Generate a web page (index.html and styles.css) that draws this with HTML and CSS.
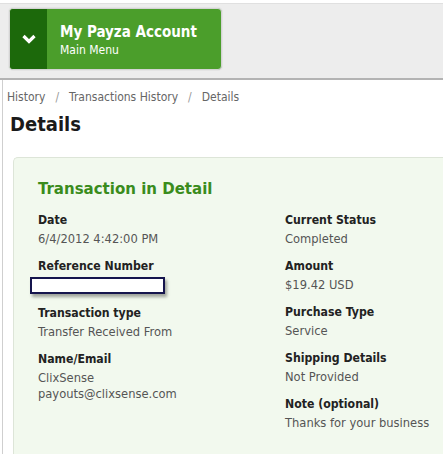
FILE: index.html
```html
<!DOCTYPE html>
<html lang="en">
<head>
  <meta charset="UTF-8" />
  <title>Details</title>
  <link rel="stylesheet" href="styles.css">
</head>
<body>
  <div class="topbar">
    <div class="menu-btn">
      <div class="menu-toggle">
        <svg width="16" height="12" viewBox="0 0 16 12"><path d="M2.5 3 L8 8.5 L13.5 3" fill="none" stroke="#fff" stroke-width="3.2"/></svg>
      </div>
      <div class="menu-text">
        <div class="menu-title">My Payza Account</div>
        <div class="menu-sub">Main Menu</div>
      </div>
    </div>
  </div>

  <div class="page">
    <div class="crumbs">
      <span>History</span><span class="sep">/</span><span>Transactions History</span><span class="sep">/</span><span>Details</span>
    </div>
    <h1>Details</h1>

    <div class="card">
      <h2>Transaction in Detail</h2>
      <div class="cols">
        <div class="col">
          <div class="field">
            <div class="label">Date</div>
            <div class="value">6/4/2012 4:42:00 PM</div>
          </div>
          <div class="field">
            <div class="label">Reference Number</div>
            <div class="refbox"></div>
          </div>
          <div class="field">
            <div class="label">Transaction type</div>
            <div class="value">Transfer Received From</div>
          </div>
          <div class="field">
            <div class="label">Name/Email</div>
            <div class="value">ClixSense<br>payouts@clixsense.com</div>
          </div>
        </div>
        <div class="col">
          <div class="field">
            <div class="label">Current Status</div>
            <div class="value">Completed</div>
          </div>
          <div class="field">
            <div class="label">Amount</div>
            <div class="value">$19.42 USD</div>
          </div>
          <div class="field">
            <div class="label">Purchase Type</div>
            <div class="value">Service</div>
          </div>
          <div class="field">
            <div class="label">Shipping Details</div>
            <div class="value">Not Provided</div>
          </div>
          <div class="field">
            <div class="label">Note (optional)</div>
            <div class="value">Thanks for your business</div>
          </div>
        </div>
      </div>
    </div>
  </div>
</body>
</html>
```

FILE: styles.css
```css
body {
  margin: 0;
  font-family: "DejaVu Sans Condensed", "DejaVu Sans", sans-serif;
  background: #fff;
  color: #222;
  width: 443px;
  height: 454px;
  overflow: hidden;
}
.topbar {
  margin-top: 3px;
  border-top: 1px solid #e0e0e0;
  background: #ededed;
  height: 70px;
  border-bottom: 2px solid #b3b3b3;
  padding: 4px 0 0 9px;
}
.menu-btn {
  display: flex;
  width: 211px;
  height: 60px;
  border: 1px solid #d4d4d4;
  border-radius: 4px;
  background: #4b9e2b;
  box-shadow: 0 0 0 1px #e4e4e4;
  overflow: hidden;
}
.menu-toggle {
  width: 37px;
  background: #1c690b;
  display: flex;
  align-items: center;
  justify-content: center;
}
.menu-text {
  color: #fff;
  padding: 13px 0 0 13px;
}
.menu-title {
  font-weight: bold;
  font-size: 15px;
  line-height: 20px;
}
.menu-sub {
  font-size: 12px;
  line-height: 16px;
}
.page {
  margin-left: 2px;
  border-left: 1px solid #cfcfcf;
  padding: 9px 0 0 4px;
  height: 374px;
  box-sizing: border-box;
  overflow: hidden;
}
.crumbs {
  font-size: 12px;
  color: #666;
  line-height: 16px;
}
.sep {
  margin: 0 10px;
  color: #999;
}
h1 {
  font-size: 20px;
  font-weight: bold;
  color: #1a1a1a;
  margin: 6px 0 0 3px;
  line-height: 26px;
}
.card {
  margin: 20px 0 0 6px;
  background: #f2f9ee;
  border: 1px solid #dde5d8;
  border-right: none;
  border-bottom: none;
  border-radius: 5px 0 0 0;
  padding: 18px 0 0 24px;
  height: 300px;
  overflow: hidden;
}
h2 {
  margin: 0 0 12px;
  color: #3a8c1c;
  font-size: 16.7px;
  line-height: 24px;
}
.cols {
  display: flex;
}
.col {
  flex: none;
  width: 247px;
}
.field {
  margin-bottom: 11px;
}
.label {
  font-weight: bold;
  font-size: 12.2px;
  line-height: 16px;
  margin-bottom: 3px;
}
.value {
  font-size: 12.8px;
  line-height: 16px;
  color: #555;
}
.refbox {
  width: 131px;
  height: 13px;
  margin: 0 0 3px -8px;
  background: #fff;
  border: 2px solid #15154d;
  box-shadow: 2px 3px 3px rgba(0, 0, 0, 0.35);
}
```
